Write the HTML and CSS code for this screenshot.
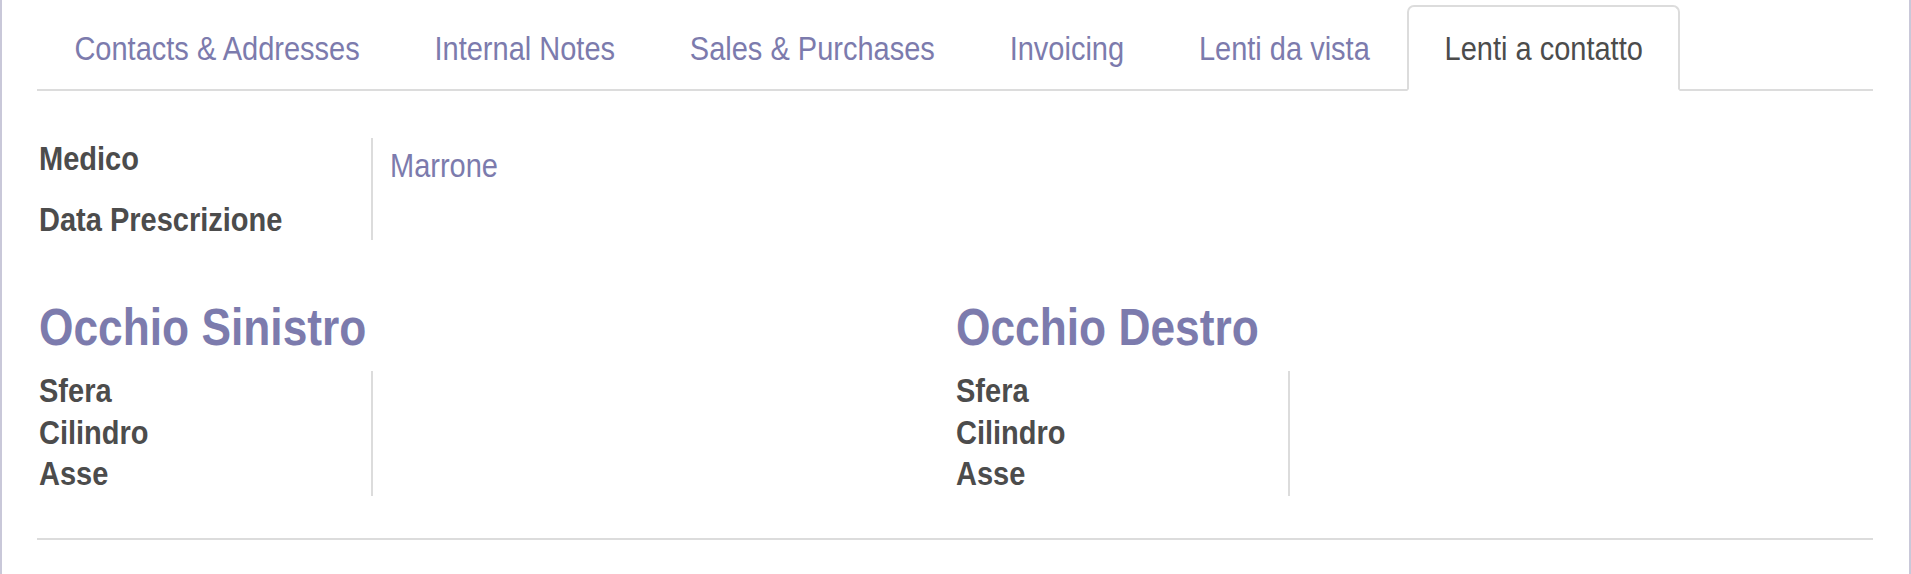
FILE: index.html
```html
<!DOCTYPE html>
<html lang="it">
<head>
<meta charset="utf-8">
<title>Lenti a contatto</title>
<link rel="stylesheet" href="styles.css">
</head>
<body>
<div class="sheet">
  <ul class="tabs">
    <li class="tab"><span class="tab-link"><span class="tx">Contacts &amp; Addresses</span></span></li>
    <li class="tab"><span class="tab-link"><span class="tx">Internal Notes</span></span></li>
    <li class="tab"><span class="tab-link"><span class="tx">Sales &amp; Purchases</span></span></li>
    <li class="tab"><span class="tab-link"><span class="tx">Invoicing</span></span></li>
    <li class="tab"><span class="tab-link"><span class="tx">Lenti da vista</span></span></li>
    <li class="tab active"><span class="tab-link"><span class="tx">Lenti a contatto</span></span></li>
  </ul>

  <div class="pane">
    <div class="group top-group">
      <div class="labels">
        <div class="label row-tall"><span class="tx">Medico</span></div>
        <div class="label"><span class="tx">Data Prescrizione</span></div>
      </div>
      <div class="values">
        <div class="value link"><span class="tx">Marrone</span></div>
      </div>
    </div>

    <div class="eyes">
      <div class="eye">
        <h2 class="eye-title"><span class="tx">Occhio Sinistro</span></h2>
        <div class="group">
          <div class="labels">
            <div class="label"><span class="tx">Sfera</span></div>
            <div class="label"><span class="tx">Cilindro</span></div>
            <div class="label"><span class="tx">Asse</span></div>
          </div>
          <div class="values"></div>
        </div>
      </div>
      <div class="eye">
        <h2 class="eye-title"><span class="tx">Occhio Destro</span></h2>
        <div class="group">
          <div class="labels">
            <div class="label"><span class="tx">Sfera</span></div>
            <div class="label"><span class="tx">Cilindro</span></div>
            <div class="label"><span class="tx">Asse</span></div>
          </div>
          <div class="values"></div>
        </div>
      </div>
    </div>

    <div class="rule"></div>
  </div>
</div>
</body>
</html>
```

FILE: styles.css
```css
* { box-sizing: border-box; }

html, body {
  margin: 0;
  padding: 0;
  background: #ffffff;
}

body {
  font-family: "Liberation Sans", Arial, sans-serif;
  font-size: 29px;
  line-height: 1.43;
  color: #4c4c4c;
}

.tx {
  display: inline-block;
  transform: scaleY(1.15);
}

.sheet {
  height: 574px;
  border-left: 2px solid #c9c8d9;
  border-right: 2px solid #c9c8d9;
  padding: 0 36px 0 35px;
  background: #ffffff;
}

.tabs {
  list-style: none;
  margin: 0;
  padding: 5px 0 0 0;
  display: flex;
  border-bottom: 2px solid #dcdcdc;
}

.tab {
  margin-bottom: -2px;
}

.tab-link {
  display: block;
  padding: 22px 35.4px 19px 35.4px;
  border: 2px solid transparent;
  border-radius: 7px 7px 0 0;
  color: #7c7bad;
  white-space: nowrap;
}

.tab.active .tab-link {
  color: #4c4c4c;
  background: #ffffff;
  border-color: #dcdcdc #dcdcdc #ffffff #dcdcdc;
}

.pane {
  padding: 0 0 0 2px;
}

.group {
  display: flex;
}

.top-group {
  margin-top: 47px;
}

.labels {
  width: 334px;
  border-right: 2px solid #dcdcdc;
  display: flex;
  flex-direction: column;
}

.label {
  font-weight: bold;
  line-height: 41.4px;
  white-space: nowrap;
}

.top-group .label {
  line-height: 42px;
}

.row-tall {
  margin-top: -1px;
  margin-bottom: 19px;
}

.values {
  flex: 1;
  padding-left: 17px;
}

.value {
  line-height: 42px;
  padding-top: 5.5px;
}

.link {
  color: #7c7bad;
}

.eyes {
  display: flex;
  margin-top: 63px;
}

.eye {
  width: 918px;
}

.eye-title {
  margin: 0 0 18px 0;
  font-size: 44.3px;
  line-height: 50px;
  font-weight: bold;
  color: #7c7bad;
}

.rule {
  margin-top: 42px;
  margin-left: -2px;
  border-top: 2px solid #dcdcdc;
}
```
